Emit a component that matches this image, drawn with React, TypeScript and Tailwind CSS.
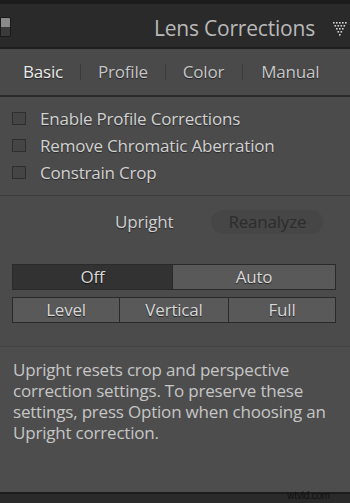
const font = { fontFamily: "'Open Sans', 'Liberation Sans', sans-serif" };

function DottedTriangle() {
  const dots: JSX.Element[] = [];
  const rows = [5, 4, 3, 2, 1];
  rows.forEach((count, r) => {
    for (let i = 0; i < count; i++) {
      const x = 1 + r * 1.5 + i * 3;
      dots.push(<rect key={`${r}-${i}`} x={x} y={1 + r * 3} width="1.6" height="1.6" fill="#d4d4d4" />);
    }
  });
  return (
    <svg width="15" height="16" viewBox="0 0 15 16">
      {dots}
    </svg>
  );
}

function Check({ label }: { label: string }) {
  return (
    <div className="flex h-[27px] items-center">
      <span className="ml-[12px] h-[13px] w-[14px] border border-[#2e2e2e] bg-[#454545]" />
      <span className="ml-[14px] text-[17px] text-[#d2d2d2] [text-shadow:0_1px_1px_#2a2a2a]">{label}</span>
    </div>
  );
}

export default function App() {
  return (
    <div
      className="flex h-[503px] w-[350px] flex-col overflow-hidden bg-[#4b4b4b] tracking-[-0.2px]"
      style={font}
    >
      <div className="h-[4px] bg-[#1c1c1c]" />
      <div className="relative flex h-[43px] items-center bg-[#2a2a2a] pt-[6px]">
        <div className="absolute left-0 top-[13px] h-[20px] w-[11px] overflow-hidden rounded-r-[2px] border border-[#1a1a1a]">
          <div className="h-1/2 bg-[#8a8a8a]" />
          <div className="h-1/2 bg-[#3a3a3a]" />
        </div>
        <span className="ml-auto mr-[35px] text-[21px] text-[#b9b9b9]">Lens Corrections</span>
        <span className="absolute right-[3px] top-[17px]">
          <DottedTriangle />
        </span>
      </div>
      <div className="h-[2px] bg-[#1e1e1e]" />
      <div className="flex h-[46px] items-center bg-[#4a4a4a] pl-[23px] text-[17px]">
        <span className="text-[#ececec] [text-shadow:0_1px_1px_#222]">Basic</span>
        <span className="mx-[17px] h-[16px] w-px bg-[#3a3a3a]" />
        <span className="text-[#c7c7c7] [text-shadow:0_1px_1px_#222]">Profile</span>
        <span className="mx-[17px] h-[16px] w-px bg-[#3a3a3a]" />
        <span className="text-[#c7c7c7] [text-shadow:0_1px_1px_#222]">Color</span>
        <span className="mx-[18px] h-[16px] w-px bg-[#3a3a3a]" />
        <span className="text-[#c7c7c7] [text-shadow:0_1px_1px_#222]">Manual</span>
      </div>
      <div className="h-[2px] bg-[#2a2a2a]" />
      <div className="flex flex-col pt-[8px]">
        <Check label="Enable Profile Corrections" />
        <Check label="Remove Chromatic Aberration" />
        <Check label="Constrain Crop" />
      </div>
      <div className="mt-[9px] h-px bg-[#3c3c3c]" />
      <div className="flex h-[52px] items-center">
        <span className="ml-[115px] text-[17px] text-[#d0d0d0] [text-shadow:0_1px_1px_#2a2a2a]">Upright</span>
        <span className="ml-[38px] flex h-[24px] w-[112px] items-center justify-center rounded-full bg-[#464646] text-[17px] text-[#2c2c2c]">
          Reanalyze
        </span>
      </div>
      <div className="ml-[12px] mr-[14px] mt-[16px] flex h-[26px] border border-[#2a2a2a] text-[17px] text-[#d8d8d8]">
        <div className="flex flex-1 items-center justify-center bg-[#323232] [text-shadow:0_1px_1px_#111]">Off</div>
        <div className="flex w-[163px] items-center justify-center border-l border-[#2a2a2a] bg-[#595959] [text-shadow:0_1px_1px_#222]">
          Auto
        </div>
      </div>
      <div className="ml-[12px] mr-[14px] mt-[7px] flex h-[26px] border border-[#2a2a2a] text-[17px] text-[#d8d8d8] [text-shadow:0_1px_1px_#222]">
        <div className="flex w-[106px] items-center justify-center bg-[#595959]">Level</div>
        <div className="flex w-[109px] items-center justify-center border-l border-[#2a2a2a] bg-[#595959]">Vertical</div>
        <div className="flex flex-1 items-center justify-center border-l border-[#2a2a2a] bg-[#595959]">Full</div>
      </div>
      <div className="mt-[23px] h-px bg-[#424242]" />
      <div className="flex-1 bg-[#4d4d4d] px-[13px] pt-[12px]">
        <p className="text-[17px] leading-[21px] text-[#c6c6c6]">
          Upright resets crop and perspective correction settings. To preserve these settings, press Option when
          choosing an Upright correction.
        </p>
      </div>
      <div className="relative h-[11px] border-t-[2px] border-[#1c1c1c] bg-[#2a2a2a]">
        <span className="absolute right-[20px] top-[-6px] text-[10px] text-[#111]" style={{ fontFamily: "'Liberation Sans', sans-serif" }}>
          wtvid.com
        </span>
      </div>
    </div>
  );
}
